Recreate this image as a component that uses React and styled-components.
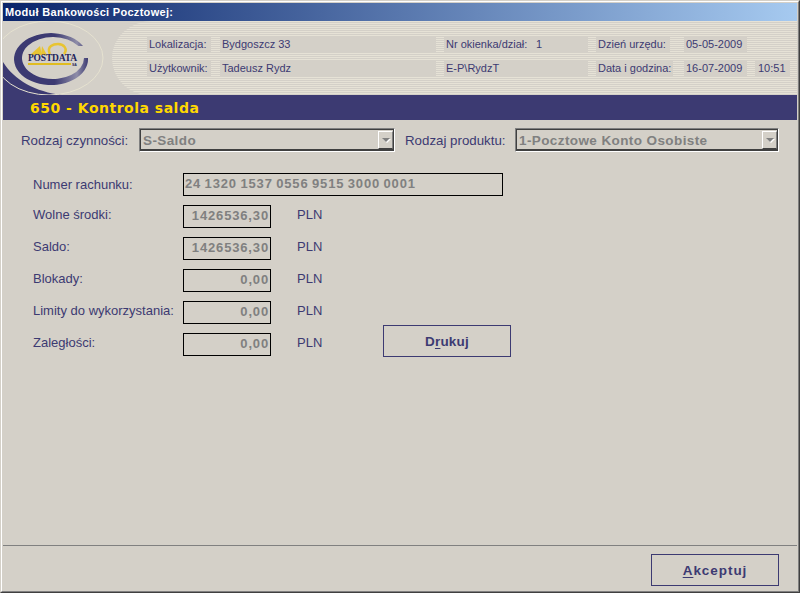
import React from "react";
import styled, { createGlobalStyle } from "styled-components";

const navy = "#3c3a72";
const Global = createGlobalStyle`
  html, body { margin: 0; padding: 0; background: #d4d0c8; }
  #root { width: 800px; height: 593px; overflow: hidden; }
`;
const Win = styled.div`
  box-sizing: border-box; width: 800px; height: 593px; display: flex; flex-direction: column;
  background: #d4d0c8; border: 1px solid; border-color: #d4d0c8 #404040 #404040 #d4d0c8;
  font-family: "Liberation Sans", Arial, sans-serif; color: ${navy};
`;
const WinInner = styled.div`
  flex: 1; min-height: 0; display: flex; flex-direction: column;
  border: 1px solid; border-color: #fff #808080 #808080 #fff; padding: 1px;
`;
const TitleBar = styled.div`
  height: 18px; flex: none; display: flex; align-items: center; padding-left: 2px;
  background: linear-gradient(90deg, #0a246a, #a6caf0);
  color: #fff; font: bold 11px "Liberation Sans", Arial, sans-serif; letter-spacing: 0.3px;
`;
const Header = styled.div`
  height: 74px; flex: none; display: flex; background: #d4d0c8;
`;
const LogoSvg = styled.svg`
  width: 109px; height: 74px; flex: none; display: block;
`;
const Stripes = styled.div`
  flex: 1; padding: 15px 0 0 35px; display: flex; flex-direction: column; gap: 8px;
  border-radius: 40px 0 0 37px / 37px 0 0 37px;
  background: repeating-linear-gradient(180deg, #e6e2d6 0 1px, #d4d0c8 1px 2px);
`;
const InfoRow = styled.div`
  display: flex; height: 16px;
`;
const Cell = styled.div`
  box-sizing: border-box; width: ${p => p.$w}px; margin-left: ${p => p.$gap || 0}px;
  padding-left: ${p => p.$pad ?? 2}px; flex: none; background: #d4d0c8;
  font-size: 11px; line-height: 16px; white-space: nowrap; overflow: hidden;
`;
const Band = styled.div`
  height: 25px; flex: none; box-sizing: border-box; padding-left: 27px; background: ${navy};
  color: #ffd800; font: bold 14px/26px "DejaVu Sans", Verdana, sans-serif; letter-spacing: 0.5px;
`;
const Main = styled.div`
  flex: 1; min-height: 0; display: flex; flex-direction: column; padding: 8px 0 0 18px;
`;
const SelectRow = styled.div`
  display: flex; align-items: center; height: 24px; font-size: 13.3px;
`;
const SelectLabel = styled.div`
  width: ${p => p.$w}px; flex: none; white-space: nowrap;
`;
const Select = styled.div`
  box-sizing: border-box; width: ${p => p.$w}px; height: 24px; flex: none; display: flex;
  justify-content: space-between; align-items: center; margin-right: 10px;
  border: 1px solid; border-color: #808080 #fff #fff #808080;
  background: #d4d0c8;
`;
const SelectInner = styled.div`
  flex: 1; align-self: stretch; display: flex; justify-content: space-between; align-items: center;
  border: 1px solid #404040; border-bottom-width: 2px;
  padding: 1px 0 0 2px; color: #808080;
  font: bold 13.5px "Liberation Sans", Arial, sans-serif; letter-spacing: 0.4px; white-space: nowrap;
`;
const Arrow = styled.div`
  box-sizing: border-box; width: 15px; height: 18px; flex: none; display: flex;
  align-items: center; justify-content: center;
  border: 1px solid; border-color: #fff #808080 #404040 #fff; margin-top: -1px;
  &::after {
    content: ""; border: 4px solid transparent; border-top: 4px solid #808080; border-bottom: 0;
    filter: drop-shadow(1px 1px 0 #fff);
  }
`;
const FormArea = styled.div`
  display: flex; padding: 21px 0 0 12px;
`;
const Fields = styled.div`
  display: flex; flex-direction: column; gap: 9px; width: 350px;
`;
const FieldRow = styled.div`
  display: flex; align-items: center; height: 23px; font-size: 13px;
`;
const FieldLabel = styled.div`
  width: 150px; flex: none; white-space: nowrap; margin-top: ${p => p.$first ? 0 : -5}px;
`;
const Box = styled.div`
  box-sizing: border-box; width: ${p => p.$w || 88}px; height: 23px; flex: none;
  border: 1px solid #000; padding: 0 1px; color: #808080;
  text-align: ${p => p.$left ? "left" : "right"};
  font: bold 13px/20px "Liberation Sans", Arial, sans-serif; letter-spacing: 0.85px;
  word-spacing: -1px; white-space: nowrap;
`;
const Currency = styled.div`
  margin: -5px 0 0 26px;
`;
const ActionButton = styled.button`
  box-sizing: border-box; width: 128px; height: 32px; flex: none; background: transparent;
  border: 1px solid ${navy}; color: ${navy}; padding: 0;
  font: bold 13.5px "Liberation Sans", Arial, sans-serif; letter-spacing: ${p => p.$ls}px;
  u { text-underline-offset: 2px; }
`;
const PrintButton = styled(ActionButton)`
  align-self: flex-end; margin-bottom: -1px;
`;
const Footer = styled.div`
  height: 45px; flex: none; box-sizing: border-box; display: flex; justify-content: flex-end;
  padding: 8px 18px 0 0; border-top: 1px solid #808080;
`;

const info1 = [
  ["Lokalizacja:", 64, 0], ["Bydgoszcz 33", 216, 9], ["Nr okienka/dział:", 89, 8],
  ["1", 55, 0, 3], ["Dzień urzędu:", 74, 8], ["05-05-2009", 63, 14],
];
const info2 = [
  ["Użytkownik:", 64, 0], ["Tadeusz Rydz", 216, 9], ["E-P\\RydzT", 144, 8],
  ["Data i godzina:", 77, 8], ["16-07-2009", 63, 11], ["10:51", 35, 8, 3],
];
const rows = [
  ["Wolne środki:", "1426536,30"], ["Saldo:", "1426536,30"], ["Blokady:", "0,00"],
  ["Limity do wykorzystania:", "0,00"], ["Zaległości:", "0,00"],
];

const Logo = () => (
  <LogoSvg viewBox="3 21 109 74">
    <defs>
      <linearGradient id="ring" x1="0" y1="0" x2="1" y2="0">
        <stop offset="0" stopColor="#3c3a72" />
        <stop offset="0.55" stopColor="#3c3a72" />
        <stop offset="0.85" stopColor="#8f8da8" />
        <stop offset="1" stopColor="#3c3a72" />
      </linearGradient>
    </defs>
    <path d="M3 62 C14 80 36 92 62 95 L3 95 Z" fill={navy} />
    <ellipse cx="49" cy="58" rx="54" ry="37" fill="none" stroke="#e6e2d0" strokeWidth="1" />
    <path d="M88 58 A37 26 0 1 1 83 46 L78.4 46 A31 21 0 1 0 84 58 Z" fill="url(#ring)" />
    <path d="M30 55 L40 46 L42 55 Z" fill="#e8c432" />
    <path d="M42 46 L47 55 L41 55 Z" fill="#e8c432" />
    <path d="M50 54 C46 46 54 44 58 44 C64 44 68 49 64 54" fill="none" stroke="#e8c432" strokeWidth="2.5" />
    <text x="28" y="61" fontFamily="'Liberation Serif', serif" fontWeight="bold" fontSize="9.5" textLength="49" fill="#23235a">POSTDATA</text>
    <rect x="28" y="63" width="43" height="2" fill="#e0bc20" />
    <text x="72" y="66" fontFamily="'Liberation Sans', sans-serif" fontWeight="bold" fontSize="3.5" fill="#23235a">SA</text>
  </LogoSvg>
);

const InfoCells = ({ cells }) => (
  <InfoRow>
    {cells.map(([t, w, g, pad]) => <Cell key={t} $w={w} $gap={g} $pad={pad}>{t}</Cell>)}
  </InfoRow>
);

export default function App() {
  return (
    <>
      <Global />
      <Win>
        <WinInner>
          <TitleBar>Moduł Bankowości Pocztowej:</TitleBar>
          <Header>
            <Logo />
            <Stripes>
              <InfoCells cells={info1} />
              <InfoCells cells={info2} />
            </Stripes>
          </Header>
          <Band>650 - Kontrola salda</Band>
          <Main>
            <SelectRow>
              <SelectLabel $w={118}>Rodzaj czynności:</SelectLabel>
              <Select $w={256}><SelectInner>S-Saldo<Arrow /></SelectInner></Select>
              <SelectLabel $w={110}>Rodzaj produktu:</SelectLabel>
              <Select $w={264}><SelectInner>1-Pocztowe Konto Osobiste<Arrow /></SelectInner></Select>
            </SelectRow>
            <FormArea>
              <Fields>
                <FieldRow>
                  <FieldLabel $first>Numer rachunku:</FieldLabel>
                  <Box $w={320} $left>24 1320 1537 0556 9515 3000 0001</Box>
                </FieldRow>
                {rows.map(([l, v]) => (
                  <FieldRow key={l}>
                    <FieldLabel>{l}</FieldLabel>
                    <Box>{v}</Box>
                    <Currency>PLN</Currency>
                  </FieldRow>
                ))}
              </Fields>
              <PrintButton $ls={0.2}>D<u>r</u>ukuj</PrintButton>
            </FormArea>
          </Main>
          <Footer>
            <ActionButton $ls={0.95}><u>A</u>kceptuj</ActionButton>
          </Footer>
        </WinInner>
      </Win>
    </>
  );
}
